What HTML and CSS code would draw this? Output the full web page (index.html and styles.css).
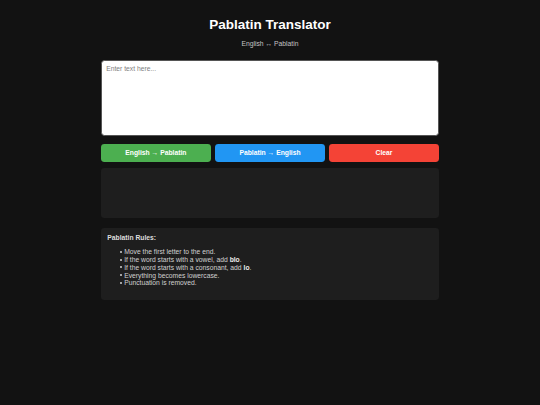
FILE: index.html
```html
<!DOCTYPE html>
<html lang="en">
<head>
<meta charset="utf-8">
<title>Pablatin Translator</title>
<link rel="stylesheet" href="styles.css">
</head>
<body>
<main class="container">
  <h1 class="title">Pablatin Translator</h1>
  <p class="subtitle">English ↔ Pablatin</p>
  <textarea class="input" placeholder="Enter text here..."></textarea>
  <div class="buttons">
    <button class="btn btn-green">English → Pablatin</button>
    <button class="btn btn-blue">Pablatin → English</button>
    <button class="btn btn-red">Clear</button>
  </div>
  <div class="output"></div>
  <section class="rules">
    <div class="rules-title">Pablatin Rules:</div>
    <ul class="rules-list">
      <li>Move the first letter to the end.</li>
      <li>If the word starts with a vowel, add <b>blo</b>.</li>
      <li>If the word starts with a consonant, add <b>lo</b>.</li>
      <li>Everything becomes lowercase.</li>
      <li>Punctuation is removed.</li>
    </ul>
  </section>
</main>
</body>
</html>
```

FILE: styles.css
```css
* { box-sizing: border-box; }
html, body {
  margin: 0;
  padding: 0;
  background: #121212;
}
body {
  font-family: "Liberation Sans", Arial, sans-serif;
  color: #e0e0e0;
  font-size: 6.75px;
}
.container {
  width: 338px;
  margin: 0 auto;
  padding-top: 8.4px;
}
.title {
  margin: 9px 0 0;
  font-size: 13.5px;
  font-weight: bold;
  color: #ffffff;
  text-align: center;
  line-height: 15.5px;
}
.subtitle {
  margin: 7.5px 0 0;
  text-align: center;
  color: #c4c4c4;
  font-size: 6.75px;
  line-height: 7.8px;
}
.input {
  display: block;
  width: 100%;
  height: 76px;
  margin-top: 11.5px;
  padding: 4.2px;
  border: 1px solid #555;
  border-radius: 3.4px;
  background: #ffffff;
  color: #222;
  font-family: "Liberation Sans", Arial, sans-serif;
  font-size: 6.75px;
  resize: none;
  outline: none;
}
.input::placeholder { color: #808080; }
.buttons {
  display: flex;
  gap: 4.2px;
  margin-top: 8px;
}
.btn {
  flex: 1;
  height: 18px;
  border: none;
  border-radius: 3.4px;
  color: #fff;
  font-family: "Liberation Sans", Arial, sans-serif;
  font-size: 6.75px;
  font-weight: bold;
  padding: 0;
}
.btn-green { background: #4caf50; }
.btn-blue { background: #2196f3; }
.btn-red { background: #f44336; }
.output {
  margin-top: 6px;
  height: 50.5px;
  background: #1e1e1e;
  border-radius: 3.4px;
}
.rules {
  margin-top: 9.4px;
  background: #1e1e1e;
  border-radius: 3.4px;
  padding: 6.3px;
  color: #d0d0d0;
  line-height: 7.76px;
}
.rules-title {
  font-weight: bold;
  color: #dddddd;
}
.rules-list {
  margin: 6.75px 0;
  padding-left: 16.9px;
  list-style: none;
}
.rules-list li::before {
  content: "";
  display: inline-block;
  width: 2px;
  height: 2px;
  border-radius: 50%;
  background: #d0d0d0;
  margin-left: -4.6px;
  margin-right: 2.6px;
  vertical-align: 1.6px;
}
.rules-list b { color: #eeeeee; }
```
